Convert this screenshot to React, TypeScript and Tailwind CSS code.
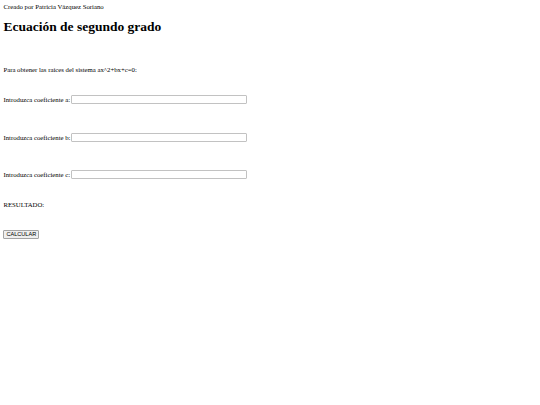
export default function App() {
  return (
    <div className="min-h-[405px] bg-white p-[3.4px] font-['Liberation_Serif',serif] text-[6.75px] leading-[normal] text-black">
      <div>Creado por Patricia Vázquez Soriano</div>
      <h1 className="my-[9px] text-[13.5px] font-bold leading-[normal]">Ecuación de segundo grado</h1>

      <div className="mt-[31px]">Para obtener las raíces del sistema ax^2+bx+c=0:</div>

      <div className="mt-[22px] flex items-center gap-[1px]">
        <span>Introduzca coeficiente a:</span>
        <input className="h-[9px] w-[176px] rounded-[1px] border border-[#c2c2c2] bg-white" />
      </div>
      <div className="mt-[29px] flex items-center gap-[1px]">
        <span>Introduzca coeficiente b:</span>
        <input className="h-[9px] w-[176px] rounded-[1px] border border-[#c2c2c2] bg-white" />
      </div>
      <div className="mt-[28px] flex items-center gap-[1px]">
        <span>Introduzca coeficiente c:</span>
        <input className="h-[9px] w-[176px] rounded-[1px] border border-[#c2c2c2] bg-white" />
      </div>

      <div className="mt-[22px]">RESULTADO:</div>

      <button className="mt-[22px] block h-[9px] rounded-[1px] border border-[#a3a3a3] bg-[#efefef] px-[2px] font-['Liberation_Sans',sans-serif] text-[5.6px] leading-none">
        CALCULAR
      </button>
    </div>
  );
}
